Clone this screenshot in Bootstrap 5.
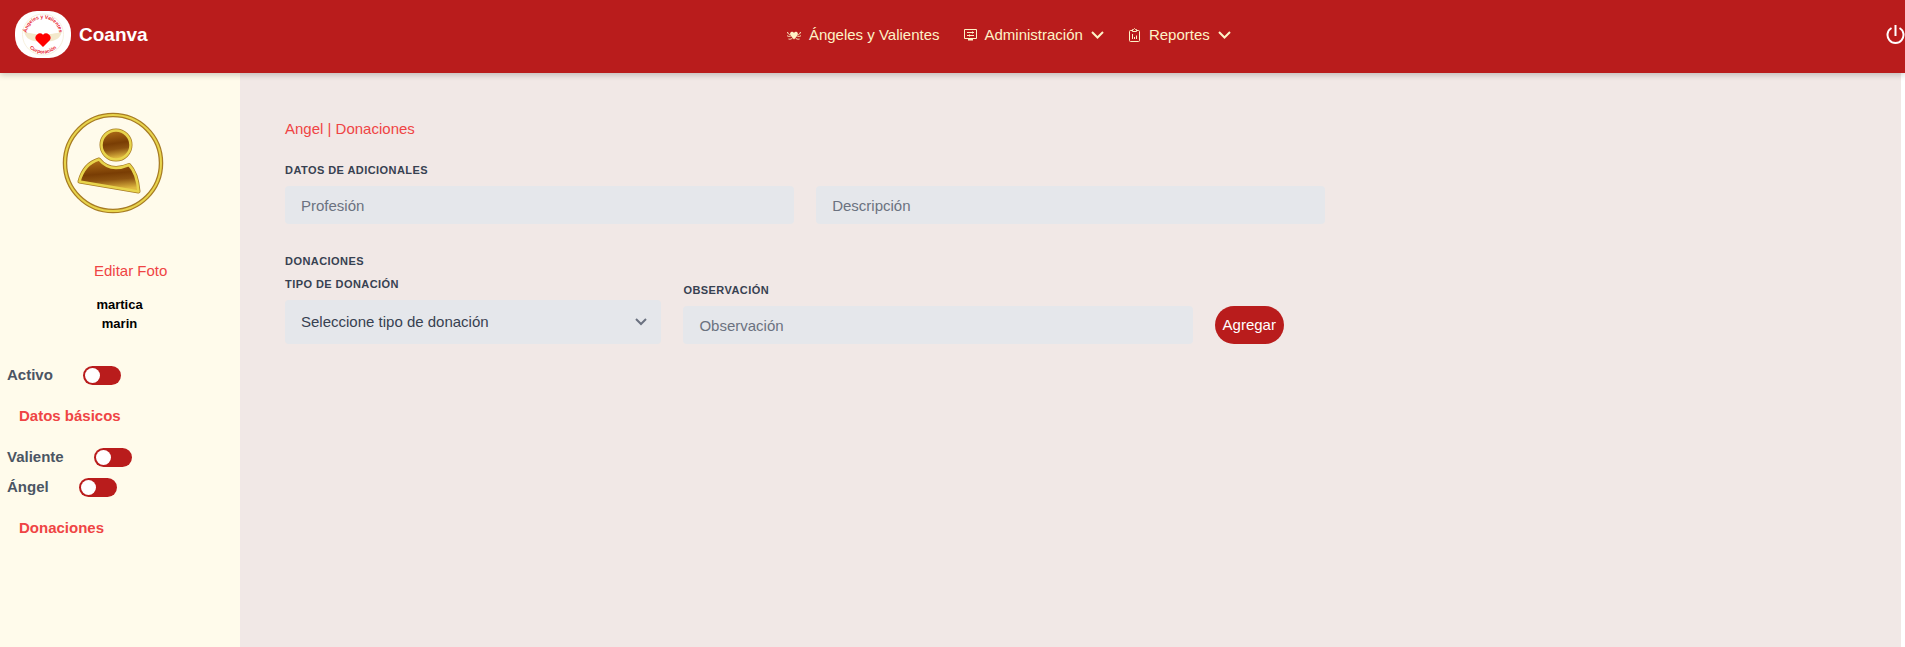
<!DOCTYPE html>
<html lang="es">
<head>
<meta charset="utf-8">
<meta name="viewport" content="width=device-width, initial-scale=1">
<title>Coanva</title>
<link href="https://cdn.jsdelivr.net/npm/bootstrap@5.3.0/dist/css/bootstrap.min.css" rel="stylesheet">
<style>
:root { --brand: #b91c1c; --accent: #ef4444; --cream: #fffbeb; --field: #e5e7eb; }
body { font-family: "Liberation Sans", Arial, sans-serif; font-size: 15px; line-height: 22px; color: #374151; background: #fff; }
.page { min-height: 100vh; }
.topbar { background: var(--brand); height: 73px; padding: 0 0 4px 15px; box-shadow: 0 2px 6px rgba(0,0,0,.2); z-index: 2; }
.topbar a { text-decoration: none; color: #fef3c7; }
.topbar .navbar-brand { color: #fff; font-size: 19px; font-weight: 700; gap: 8px; margin: 0; padding: 0; }
.menu { gap: 24px; margin-right: 16px; }
.menu .nav-link { padding: 0; gap: 8px; color: #fef3c7; }
.power { padding: 0; border: 0; background: none; color: #fff; line-height: 1; }
.sidebar { width: 240px; background: var(--cream); padding: 38px 8px 0 7px; }
.avatar { margin-left: 54px; }
.sidebar a { color: var(--accent); text-decoration: none; }
.edit-photo { margin: 45px 0 0 87px; }
.person { color: #000; font-size: 13px; line-height: 19px; font-weight: 700; margin: 13px 0 31px; }
.toggle-line { gap: 30px; color: #4b5563; font-weight: 700; height: 22px; }
.toggle-line .form-check-input { width: 38px; height: 19px; margin: 0; border: 0; background-color: var(--brand); background-image: url("data:image/svg+xml,%3csvg xmlns='http://www.w3.org/2000/svg' viewBox='0 0 38 19'%3e%3ccircle cx='9.5' cy='9.5' r='7.5' fill='white'/%3e%3c/svg%3e"); background-size: contain; background-position: left center; border-radius: 19px; }
.side-link { font-weight: 700; margin: 19px 12px; }
.content-area { background: #f1e8e6; margin-right: 4px; padding: 45px 34px 0; }
.crumb { color: var(--accent); margin: 0 11px 23px; }
.form-area { width: 1328px; max-width: 100%; }
.form-area .row { --bs-gutter-x: 22px; margin: 0; }
.form-area .donations { margin-top: 30px; }
.col-30 { flex: 0 0 auto; width: 30%; }
.col-40 { flex: 0 0 auto; width: 40%; }
.caption { display: block; font-size: 11px; line-height: 15px; font-weight: 700; letter-spacing: .04em; text-transform: uppercase; margin: 0 0 8px; color: #374151; }
.field { background-color: var(--field); border: 0; border-radius: 4px; font-size: 15px; line-height: 18px; padding: 10px 16px; height: 38px; color: #374151; }
.field::placeholder { color: #6b7280; }
select.field { height: 44px; background-image: url("data:image/svg+xml,%3csvg xmlns='http://www.w3.org/2000/svg' viewBox='0 0 12 12'%3e%3cpath fill='none' stroke='%236b7280' stroke-width='2' d='M1 3l5 5 5-5'/%3e%3c/svg%3e"); background-size: 12px; background-position: right 14px center; }
.btn-add { background: var(--brand); color: #fff; font-size: 15px; line-height: 22px; border: 0; border-radius: 19px; height: 38px; padding: 8px; }
.btn-add:hover { background: #991b1b; color: #fff; }
</style>
</head>
<body>
<div class="page d-flex flex-column">
<header class="topbar navbar flex-nowrap justify-content-between position-relative">
  <a class="navbar-brand d-flex align-items-center" href="#">
    <svg width="56" height="47" viewBox="0 0 56 47" aria-hidden="true">
      <defs><path id="arcTop" d="M11.500 24A16.500 16.500 0 0 1 44.500 24"/><path id="arcBottom" d="M8.500 23A19.500 19.500 0 0 0 47.500 23"/></defs>
      <rect width="56" height="47" rx="22" fill="#fff"/>
      <circle cx="28" cy="23.500" r="20.500" fill="none" stroke="#f7f1e0"/>
      <path d="M27 26C22 21 15 24 9 20c1 6 5 9 10 10 4 1 7 0 8-4zM29 26c5-5 12-2 18-6-1 6-5 9-10 10-4 1-7 0-8-4z" fill="#f3e9cc"/>
      <path d="M28 36l-6.800-6.800a4.400 4.400 0 0 1 6.800-5.500 4.400 4.400 0 0 1 6.800 5.500z" fill="#f00"/>
      <g font-size="5" font-weight="700" fill="#e8202a" text-anchor="middle"><text><textPath href="#arcTop" startOffset="50%">Ángeles y Valientes</textPath></text><text><textPath href="#arcBottom" startOffset="50%">Corporación</textPath></text></g>
    </svg>
    <span>Coanva</span>
  </a>
  <nav class="menu d-flex">
    <a class="nav-link d-flex align-items-center" href="#">
      <svg width="14" height="14" viewBox="0 0 14 14" fill="#fef3c7" stroke="#fef3c7" aria-hidden="true"><path stroke="none" d="M7 11.500L3.500 7.500C2 4.500 5.500 2.500 7 5c1.500-2.500 5-.5 3.500 2.500z"/><path fill="none" d="M.5 4c.5 2 1.500 2.500 2.500 3M0 7.500c1 1 2 1 3.500 1M1.500 11c1.500.5 3 0 4-1M13.500 4c-.5 2-1.500 2.500-2.500 3M14 7.500c-1 1-2 1-3.500 1M12.500 11c-1.500.5-3 0-4-1"/></svg>
      <span>Ángeles y Valientes</span></a>
    <a class="nav-link d-flex align-items-center" href="#">
      <svg width="13" height="13" viewBox="0 0 13 13" fill="none" stroke="#fef3c7" aria-hidden="true"><path d="M.5 1.500h12v9H.5zM3 4.500h7M3 7.500h7M8.500 3.500v2M5.500 6.500v2"/><path d="M4 11.500h5" stroke-width="2"/></svg>
      <span>Administración</span>
      <svg width="13" height="13" viewBox="0 0 13 13" fill="none" stroke="#fef3c7" stroke-width="2" aria-hidden="true"><path d="M1 4l5.500 5.500L12 4"/></svg></a>
    <a class="nav-link d-flex align-items-center" href="#">
      <svg width="13" height="14" viewBox="0 0 13 14" fill="none" stroke="#fef3c7" aria-hidden="true"><path d="M4 2.500H2.500a1 1 0 0 0-1 1v9a1 1 0 0 0 1 1h8a1 1 0 0 0 1-1v-9a1 1 0 0 0-1-1H9M4.500 3.500v-2h1l1-1 1 1h1v2zM4.500 6v5M6.500 9v2M8.500 7.500V11"/></svg>
      <span>Reportes</span>
      <svg width="13" height="13" viewBox="0 0 13 13" fill="none" stroke="#fef3c7" stroke-width="2" aria-hidden="true"><path d="M1 4l5.500 5.500L12 4"/></svg></a>
  </nav>
  <button class="power" type="button" aria-label="Salir"><svg class="d-block" width="19" height="19" viewBox="0 0 19 19" fill="none" stroke="#fff" stroke-width="2" aria-hidden="true"><path d="M9.500 0v11M5.500 3A8 8 0 1 0 13.500 3"/></svg></button>
</header>
<div class="d-flex flex-grow-1">
  <aside class="sidebar flex-shrink-0">
    <svg class="avatar d-block" width="104" height="104" viewBox="0 0 104 104" role="img" aria-label="Foto">
      <defs><linearGradient id="bronze" x1="0" y1="0" x2=".15" y2="1"><stop offset="0" stop-color="#b5721a"/><stop offset=".5" stop-color="#793d04"/><stop offset=".7" stop-color="#8c5210"/><stop offset="1" stop-color="#dfb840"/></linearGradient></defs>
      <g fill="none"><circle cx="52" cy="52" r="48" stroke="#a77c24" stroke-width="4.500"/><circle cx="52" cy="52" r="48" stroke="#e8d44c" stroke-width="2"/></g>
      <g stroke-linejoin="round"><g fill="none" stroke="#a77c24" stroke-width="4"><circle cx="55" cy="34" r="14.500"/><path d="M38 48.500Q49 62 68 54Q76 62 77.500 80.500L18.500 70.500Q23 53 38 48.500Z"/></g>
      <g fill="url(#bronze)" stroke="#e8d44c" stroke-width="2.500"><circle cx="55" cy="34" r="14.500"/><path d="M38 48.500Q49 62 68 54Q76 62 77.500 80.500L18.500 70.500Q23 53 38 48.500Z"/></g></g>
    </svg>
    <div class="edit-photo"><a href="#">Editar Foto</a></div>
    <div class="person text-center">martica<br>marin</div>
    <div class="toggle-line d-flex align-items-center"><label for="activo">Activo</label><input class="form-check-input" type="checkbox" role="switch" id="activo"></div>
    <div class="side-link"><a href="#">Datos básicos</a></div>
    <div class="toggle-line d-flex align-items-center mb-2"><label for="valiente">Valiente</label><input class="form-check-input" type="checkbox" role="switch" id="valiente"></div>
    <div class="toggle-line d-flex align-items-center"><label for="angel">Ángel</label><input class="form-check-input" type="checkbox" role="switch" id="angel"></div>
    <div class="side-link"><a href="#">Donaciones</a></div>
  </aside>
  <main class="content-area flex-grow-1">
    <div class="crumb">Angel | Donaciones</div>
    <form class="form-area">
      <div class="row">
        <div class="col-40"><label class="caption" for="profesion">Datos de adicionales</label><input class="form-control field" id="profesion" type="text" placeholder="Profesión"></div>
        <div class="col-40 d-flex align-items-end"><input class="form-control field" type="text" placeholder="Descripción" aria-label="Descripción"></div>
      </div>
      <div class="row donations">
        <div class="col-12"><span class="caption">Donaciones</span></div>
      </div>
      <div class="row align-items-end">
        <div class="col-30"><label class="caption" for="tipo">Tipo de donación</label><select class="form-select field" id="tipo"><option>Seleccione tipo de donación</option></select></div>
        <div class="col-40"><label class="caption" for="obs">Observación</label><input class="form-control field" id="obs" type="text" placeholder="Observación"></div>
        <div class="col-auto"><button class="btn btn-add" type="button">Agregar</button></div>
      </div>
    </form>
  </main>
</div>
</div>
<script src="https://cdn.jsdelivr.net/npm/bootstrap@5.3.0/dist/js/bootstrap.bundle.min.js"></script>
</body>
</html>
